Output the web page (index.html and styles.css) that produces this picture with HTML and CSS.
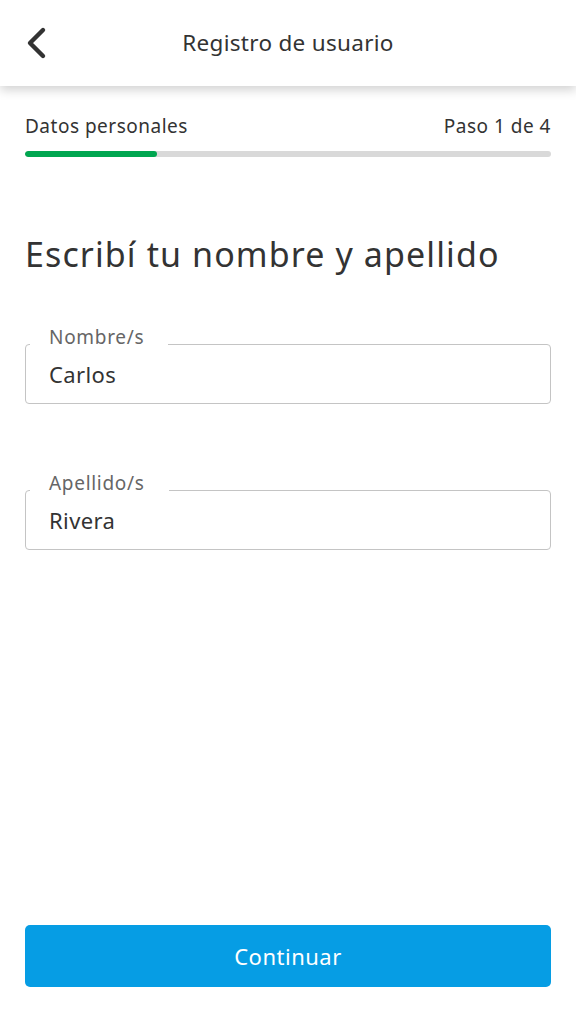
FILE: index.html
```html
<!DOCTYPE html>
<html lang="es">
<head>
<meta charset="utf-8">
<title>Registro de usuario</title>
<link rel="stylesheet" href="styles.css">
</head>
<body>
<div class="screen">
  <header class="topbar">
    <button class="back" aria-label="Volver">
      <svg width="24" height="34" viewBox="0 0 24 34"><path d="M17 4 L4 17 L17 30" fill="none" stroke="#333" stroke-width="4.4" stroke-linecap="round" stroke-linejoin="round"/></svg>
    </button>
    <h1 class="title">Registro de usuario</h1>
    <span class="spacer"></span>
  </header>

  <main class="content">
    <section class="progress">
      <div class="progress-labels">
        <span>Datos personales</span>
        <span>Paso 1 de 4</span>
      </div>
      <div class="track"><div class="fill" style="width:25%"></div></div>
    </section>

    <h2 class="heading">Escribí tu nombre y apellido</h2>

    <fieldset class="field">
      <legend>Nombre/s</legend>
      <input class="input" type="text" value="Carlos">
    </fieldset>

    <fieldset class="field field-second">
      <legend>Apellido/s</legend>
      <input class="input" type="text" value="Rivera">
    </fieldset>

    <div class="grow"></div>

    <button class="primary">Continuar</button>
  </main>
</div>
</body>
</html>
```

FILE: styles.css
```css
* { box-sizing: border-box; }

html, body {
  margin: 0;
  padding: 0;
  background: #ffffff;
}

body {
  font-family: "Noto Sans", "Open Sans", "Liberation Sans", sans-serif;
  color: #333333;
}

.screen {
  display: flex;
  flex-direction: column;
  height: 1024px;
}

.topbar {
  height: 86px;
  background: #ffffff;
  display: flex;
  align-items: center;
  padding: 0 26px;
  box-shadow: 0 4px 10px rgba(0, 0, 0, 0.18);
  position: relative;
  z-index: 1;
  flex-shrink: 0;
}

.back {
  width: 32px;
  height: 40px;
  border: 0;
  background: none;
  padding: 0;
  display: flex;
  align-items: center;
  justify-content: flex-start;
}

.title {
  flex: 1;
  margin: 0;
  text-align: center;
  font-size: 22.5px;
  letter-spacing: 0.3px;
  font-weight: 400;
  color: #333333;
  line-height: 30px;
}

.spacer { width: 32px; }

.content {
  flex: 1;
  display: flex;
  flex-direction: column;
  padding: 28px 25px 37px;
}

.progress-labels {
  display: flex;
  justify-content: space-between;
  font-size: 19px;
  letter-spacing: 0.5px;
  line-height: 24px;
  color: #333333;
}

.track {
  margin-top: 13px;
  height: 6px;
  border-radius: 3px;
  background: #d9d9d9;
  overflow: hidden;
}

.fill {
  height: 100%;
  background: #00a650;
  border-radius: 3px;
}

.heading {
  margin: 77px 0 0;
  font-size: 34px;
  letter-spacing: 1.1px;
  font-weight: 400;
  line-height: 40px;
  color: #333333;
}

.field {
  margin: 52px 0 0;
  padding: 0;
  border: 1px solid #c4c4c4;
  border-radius: 4px;
  min-width: 0;
}

.field-second { margin-top: 68px; }

.field legend {
  margin-left: 4px;
  padding: 0 24px 14px 19px;
  font-size: 19px;
  letter-spacing: 0.7px;
  line-height: 22px;
  color: #666666;
  height: 36px;
}

.input {
  display: block;
  width: 100%;
  height: 59px;
  border: 0;
  background: transparent;
  padding: 0 23px;
  margin-top: -18px;
  font-family: inherit;
  font-size: 22px;
  letter-spacing: 0.4px;
  color: #333333;
  outline: none;
}

.grow { flex: 1; }

.primary {
  height: 62px;
  border: 0;
  border-radius: 5px;
  background: #069de4;
  color: #ffffff;
  font-family: inherit;
  font-size: 22px;
  letter-spacing: 0.5px;
}
```
